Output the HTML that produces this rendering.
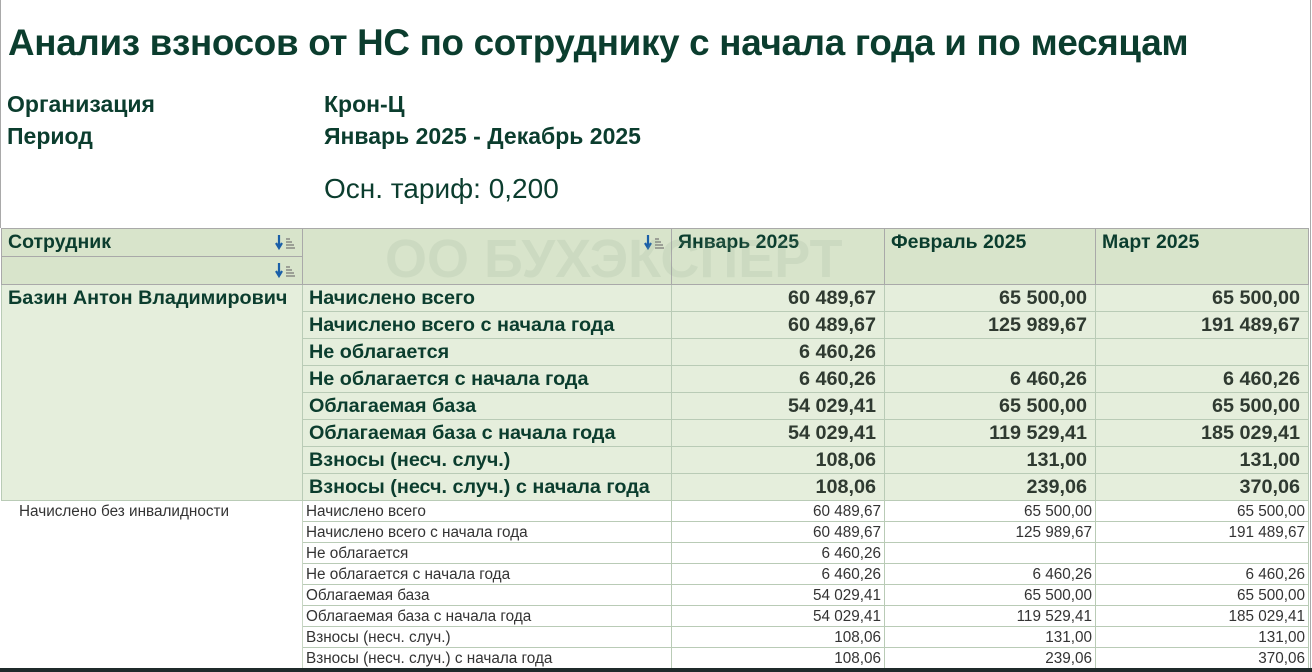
<!DOCTYPE html>
<html><head><meta charset="utf-8"><style>
*{margin:0;padding:0;box-sizing:border-box}
body{width:1312px;height:672px;background:#fff;position:relative;overflow:hidden;font-family:"Liberation Sans",sans-serif;color:#0b3d2e}
.t{position:absolute;white-space:nowrap}
table{position:absolute;left:1px;top:228px;border-collapse:collapse;table-layout:fixed}
td{border:1px solid #b9cbb6;overflow:hidden;white-space:nowrap;vertical-align:middle}
.h td{background:#d8e4cb;border-color:#a9a9a9;font-weight:bold;font-size:19.5px;vertical-align:top;padding:2px 6px;height:28px}
.b td{background:#e5eedc;font-weight:bold;font-size:19.8px;height:27px;padding:0 6px}
.b td.n{text-align:right;color:#2f3a31;padding-right:8px}
.s td{background:#fff;font-size:15.3px;height:21px;padding:0 3px;color:#333;line-height:15px}
.s td.n{text-align:right;padding-right:3px}
.ic{float:right;margin-top:2px}
</style></head><body>
<div style="position:absolute;left:0;top:0;width:1px;height:228px;background:#a9a9a9"></div>
<div style="position:absolute;right:1px;top:0;width:1px;height:672px;background:#a9a9a9"></div>
<div class="t" style="left:8px;top:22px;font-size:36.8px;font-weight:bold;letter-spacing:-0.3px">Анализ взносов от НС по сотруднику с начала года и по месяцам</div>
<div class="t" style="left:7px;top:91px;font-size:23px;font-weight:bold">Организация</div>
<div class="t" style="left:324px;top:91px;font-size:23px;font-weight:bold">Крон-Ц</div>
<div class="t" style="left:7px;top:123px;font-size:23px;font-weight:bold">Период</div>
<div class="t" style="left:324px;top:123px;font-size:23px;font-weight:bold">Январь 2025 - Декабрь 2025</div>
<div class="t" style="left:324px;top:173px;font-size:28px">Осн. тариф: 0,200</div>
<table>
<colgroup><col style="width:301px"><col style="width:369px"><col style="width:213px"><col style="width:211px"><col style="width:213px"></colgroup>
<tr class="h"><td>Сотрудник<svg class="ic" width="22" height="18" viewBox="0 0 22 18"><path d="M5 2v12M2 10l3 5 3-5" stroke="#1a5fa8" stroke-width="2.2" fill="none"/><path d="M12 6h4M12 9h6M12 12h8M12 15h9" stroke="#777" stroke-width="1.3"/></svg></td><td rowspan="2"><svg class="ic" width="22" height="18" viewBox="0 0 22 18"><path d="M5 2v12M2 10l3 5 3-5" stroke="#1a5fa8" stroke-width="2.2" fill="none"/><path d="M12 6h4M12 9h6M12 12h8M12 15h9" stroke="#777" stroke-width="1.3"/></svg></td><td rowspan="2">Январь 2025</td><td rowspan="2">Февраль 2025</td><td rowspan="2">Март 2025</td></tr>
<tr class="h"><td><svg class="ic" width="22" height="18" viewBox="0 0 22 18"><path d="M5 2v12M2 10l3 5 3-5" stroke="#1a5fa8" stroke-width="2.2" fill="none"/><path d="M12 6h4M12 9h6M12 12h8M12 15h9" stroke="#777" stroke-width="1.3"/></svg></td></tr>
<tr class="b"><td rowspan="8" style="vertical-align:top;padding-top:2px">Базин Антон Владимирович</td><td>Начислено всего</td><td class="n">60 489,67</td><td class="n">65 500,00</td><td class="n">65 500,00</td></tr>
<tr class="b"><td>Начислено всего с начала года</td><td class="n">60 489,67</td><td class="n">125 989,67</td><td class="n">191 489,67</td></tr>
<tr class="b"><td>Не облагается</td><td class="n">6 460,26</td><td class="n"></td><td class="n"></td></tr>
<tr class="b"><td>Не облагается с начала года</td><td class="n">6 460,26</td><td class="n">6 460,26</td><td class="n">6 460,26</td></tr>
<tr class="b"><td>Облагаемая база</td><td class="n">54 029,41</td><td class="n">65 500,00</td><td class="n">65 500,00</td></tr>
<tr class="b"><td>Облагаемая база с начала года</td><td class="n">54 029,41</td><td class="n">119 529,41</td><td class="n">185 029,41</td></tr>
<tr class="b"><td>Взносы (несч. случ.)</td><td class="n">108,06</td><td class="n">131,00</td><td class="n">131,00</td></tr>
<tr class="b"><td>Взносы (несч. случ.) с начала года</td><td class="n">108,06</td><td class="n">239,06</td><td class="n">370,06</td></tr>
<tr class="s"><td rowspan="8" style="vertical-align:top;padding:3px 0 0 17px;border-color:#fff #c8d6c4 #fff #fff">Начислено без инвалидности</td><td>Начислено всего</td><td class="n">60 489,67</td><td class="n">65 500,00</td><td class="n">65 500,00</td></tr>
<tr class="s"><td>Начислено всего с начала года</td><td class="n">60 489,67</td><td class="n">125 989,67</td><td class="n">191 489,67</td></tr>
<tr class="s"><td>Не облагается</td><td class="n">6 460,26</td><td class="n"></td><td class="n"></td></tr>
<tr class="s"><td>Не облагается с начала года</td><td class="n">6 460,26</td><td class="n">6 460,26</td><td class="n">6 460,26</td></tr>
<tr class="s"><td>Облагаемая база</td><td class="n">54 029,41</td><td class="n">65 500,00</td><td class="n">65 500,00</td></tr>
<tr class="s"><td>Облагаемая база с начала года</td><td class="n">54 029,41</td><td class="n">119 529,41</td><td class="n">185 029,41</td></tr>
<tr class="s"><td>Взносы (несч. случ.)</td><td class="n">108,06</td><td class="n">131,00</td><td class="n">131,00</td></tr>
<tr class="s"><td>Взносы (несч. случ.) с начала года</td><td class="n">108,06</td><td class="n">239,06</td><td class="n">370,06</td></tr>
</table>
<div class="t" style="left:385px;top:228px;font-size:54px;font-weight:bold;color:rgba(140,170,140,0.16);z-index:5">ОО БУХЭКСПЕРТ</div>
<div style="position:absolute;left:0;top:668px;width:1312px;height:4px;background:#1f2a2a"></div>
</body></html>
